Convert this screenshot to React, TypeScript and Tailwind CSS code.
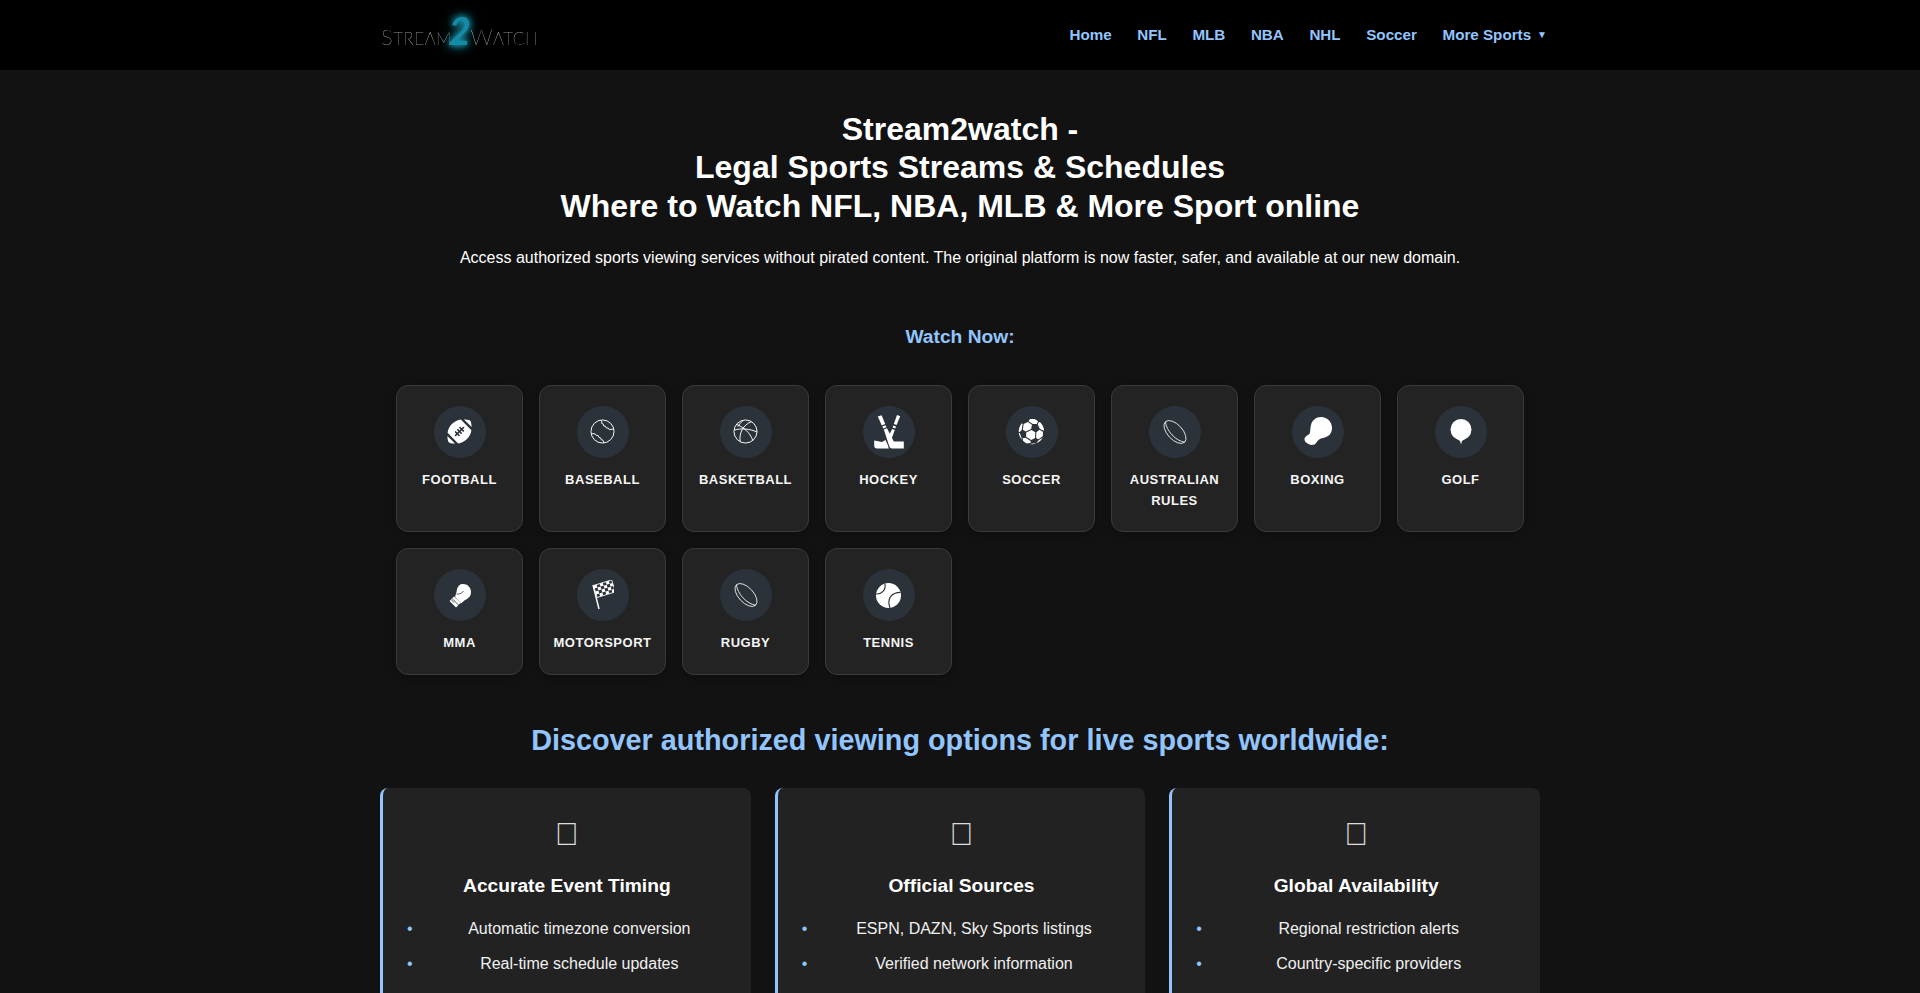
import React from "react";
import { FaFootballBall } from "react-icons/fa";
import { GiSoccerBall } from "react-icons/gi";

const RugbyBall = () => (
  <svg viewBox="0 0 26 26" className="w-[26px] h-[26px]" fill="none" stroke="white" strokeWidth="0.8">
    <g transform="rotate(47 13 13)">
      <ellipse cx="13" cy="13" rx="14" ry="7.5" />
      <path d="M-1 13 C 6 18.5, 20 18.5, 27 13" />
    </g>
  </svg>
);

const Baseball = () => (
  <svg viewBox="0 0 26 26" className="w-[25px] h-[25px]" fill="none" stroke="white" strokeWidth="1">
    <circle cx="13" cy="13" r="12" />
    <path d="M11 1.2 L12.5 3 L12 4.5 L14 5.5 L14.2 7.2 L16.2 7.6 L17 9.4 L19 9.4 L20 11 L22 10.8 L24.6 10.4" />
    <path d="M1.4 15.5 L4 15.2 L5.5 15.6 L6.5 17 L8.5 17.2 L9.2 19 L11 19.6 L11.6 21.4 L13.4 22 L14.6 24.9" />
  </svg>
);

const Basketball = () => (
  <svg viewBox="0 0 26 26" className="w-[25px] h-[25px]" fill="none" stroke="white" strokeWidth="1">
    <circle cx="13" cy="13" r="12" />
    <path d="M19 2.8 C 11 6, 6 14, 7.5 23.6" />
    <path d="M3.6 5.6 C 10 8, 18 14, 20.5 22.2" />
    <path d="M1.4 11.5 C 8 9.5, 17 10, 25 13.5" />
    <path d="M10.5 1.4 C 8 4, 6 6, 5 8" />
  </svg>
);

const HockeySticks = () => (
  <svg viewBox="0 0 30 34" className="w-[30px] h-[34px]" fill="white">
    <path d="M3.8 1.5 L7.6 0.2 L11.2 9 L7.8 10.4 Z" />
    <path d="M8.4 11.4 L11.6 10.2 L12.4 12.2 L9.2 13.4 Z" />
    <path d="M9.8 14.4 L13 13.2 L19.8 26.5 L29.8 26.5 L29.8 33.5 L18 33.5 Q16 33.5 15.2 31 Z" />
    <path d="M26.2 1.2 L23 0 L19.8 9 L22.6 10 Z" />
    <path d="M19.4 10.6 L22 11.6 L21.2 13.6 L18.6 12.6 Z" />
    <path d="M18.2 14 L20.8 15 L17 25.5 L14.8 20.5 Z" />
    <path d="M11.5 25 L13.8 30 L14.8 33.5 L3 33.5 Q0.2 33.5 0.2 30.5 L0.2 25.5 L8 27 Z" />
  </svg>
);

const BoxingBlob = () => (
  <svg viewBox="0 0 28 30" className="w-[28px] h-[30px]" fill="white">
    <path d="M17 0 C23.5 0 28 5 28 11 C28 17 24 20 19 21 C16 21.5 14 23 12.5 25.5 C11 28 8 28.5 5.5 27.5 C2 26 0 24 0.5 21.5 C1 19.5 3.5 18.5 5.5 17 C6.5 15 6 12 7 8 C8 3.5 12 0 17 0 Z" />
  </svg>
);

const GolfBall = () => (
  <svg viewBox="0 0 22 26" className="w-[22px] h-[26px]" fill="white">
    <circle cx="11" cy="10.5" r="10.5" />
    <path d="M7 20 L10 22 L11 25.5 L12 22 L15 20 Z" />
  </svg>
);

const Glove = () => (
  <svg viewBox="0 0 24 25" className="w-[24px] h-[25px]" fill="white">
    <path d="M14 1 C19 0.5 23 4 23 9 C23 13 20.5 15.5 17 17 L13 20.5 L7 14 L8.5 9 C9 5 10.5 1.5 14 1 Z" />
    <path d="M1.5 18 L6 13.5 L12.5 20 L8 24.5 Z" />
    <path d="M4 15.5 L10.5 22 M6 19.5 L3 16.5" stroke="#2c323a" strokeWidth="0.8" fill="none" />
    <path d="M8.5 11 C 11 11.5, 14 10.5, 15.5 8" stroke="#2c323a" strokeWidth="0.8" fill="none" />
  </svg>
);

const CheckerFlag = () => (
  <svg viewBox="0 0 22 30" className="w-[22px] h-[30px]">
    <path d="M1 5 L7 29" stroke="white" strokeWidth="1.4" />
    <g transform="translate(1.5 5.5) rotate(-17)" fill="white">
      <rect x="0" y="0" width="19" height="12.5" fill="#2c323a" stroke="white" strokeWidth="0.8" />
      <rect x="0" y="0" width="3.2" height="3.1" />
      <rect x="6.4" y="0" width="3.2" height="3.1" />
      <rect x="12.8" y="0" width="3.2" height="3.1" />
      <rect x="3.2" y="3.1" width="3.2" height="3.1" />
      <rect x="9.6" y="3.1" width="3.2" height="3.1" />
      <rect x="16" y="3.1" width="3" height="3.1" />
      <rect x="0" y="6.2" width="3.2" height="3.1" />
      <rect x="6.4" y="6.2" width="3.2" height="3.1" />
      <rect x="12.8" y="6.2" width="3.2" height="3.1" />
      <rect x="3.2" y="9.3" width="3.2" height="3.1" />
      <rect x="9.6" y="9.3" width="3.2" height="3.1" />
      <rect x="16" y="9.3" width="3" height="3.1" />
    </g>
  </svg>
);

const TennisBall = () => (
  <svg viewBox="0 0 24 24" className="w-[25px] h-[25px]">
    <circle cx="12" cy="12" r="12" fill="white" />
    <path d="M8.5 0.5 C 10 7, 5 11, 0.3 10.5" stroke="#2c323a" strokeWidth="1.1" fill="none" />
    <path d="M23.5 9 C 15 9, 10 15, 13.5 24" stroke="#2c323a" strokeWidth="1.1" fill="none" />
  </svg>
);

const sports = [
  { name: "Football", icon: <FaFootballBall className="w-[25px] h-[25px] text-white" /> },
  { name: "Baseball", icon: <Baseball /> },
  { name: "Basketball", icon: <Basketball /> },
  { name: "Hockey", icon: <HockeySticks /> },
  { name: "Soccer", icon: <GiSoccerBall className="w-[29px] h-[29px] text-white" /> },
  { name: "Australian Rules", icon: <RugbyBall /> },
  { name: "Boxing", icon: <BoxingBlob /> },
  { name: "Golf", icon: <GolfBall /> },
  { name: "MMA", icon: <Glove /> },
  { name: "Motorsport", icon: <CheckerFlag /> },
  { name: "Rugby", icon: <RugbyBall /> },
  { name: "Tennis", icon: <TennisBall /> },
];

const navItems = ["Home", "NFL", "MLB", "NBA", "NHL", "Soccer"];

const features = [
  { glyph: "\uE000", title: "Accurate Event Timing", items: ["Automatic timezone conversion", "Real-time schedule updates"] },
  { glyph: "\uE000", title: "Official Sources", items: ["ESPN, DAZN, Sky Sports listings", "Verified network information"] },
  { glyph: "\uE000", title: "Global Availability", items: ["Regional restriction alerts", "Country-specific providers"] },
];

function Logo() {
  return (
    <div className="flex items-baseline text-[#eeeeee] font-thin tracking-[0.6px] font-['Lato','Liberation_Sans',sans-serif] blur-[0.3px] h-[40px]">
      <span className="text-[22px]">S</span>
      <span className="text-[17px]">TREAM</span>
      <span className="text-[38px] leading-[30px] font-bold italic text-[#158ba6] [text-shadow:0_0_6px_#1fb0cc,0_0_12px_#1fb0cc] -ml-[3px] -mr-[1px]">2</span>
      <span className="text-[22px]">W</span>
      <span className="text-[17px]">ATCH</span>
    </div>
  );
}

function SportCard({ name, icon }: { name: string; icon: React.ReactNode }) {
  return (
    <a className="flex flex-col items-center px-[8px] py-[20px] rounded-xl border border-[#3a3a3a] bg-[#232323] shadow-[0_2px_8px_rgba(0,0,0,0.3)]">
      <span className="w-[52px] h-[52px] rounded-full bg-[#2c323a] flex items-center justify-center mb-[12px]">
        {icon}
      </span>
      <span className="text-[13px] leading-[20.8px] font-bold uppercase tracking-[0.5px] text-[#f5f5f5] text-center">{name}</span>
    </a>
  );
}

export default function App() {
  return (
    <div className="h-screen overflow-hidden bg-[#121212] text-white font-['Liberation_Sans',Arial,sans-serif]">
      <header className="h-[70px] bg-black">
        <div className="w-[1200px] mx-auto h-full pl-[21px] pr-[13px] flex items-center justify-between">
          <Logo />
          <nav className="flex items-center gap-[25.6px] text-[15.2px] font-bold text-[#93c5fd]">
            {navItems.map((item) => (
              <a key={item}>{item}</a>
            ))}
            <a className="flex items-center gap-[6px]">
              More Sports <span className="text-[10px]">▼</span>
            </a>
          </nav>
        </div>
      </header>

      <main className="w-[1200px] mx-auto px-5">
        <h1 className="pt-[40px] text-[32px] leading-[38.4px] font-bold text-center">
          Stream2watch -<br />
          Legal Sports Streams &amp; Schedules<br />
          Where to Watch NFL, NBA, MLB &amp; More Sport online
        </h1>
        <p className="mt-[20px] text-[16px] leading-[25.6px] text-center">
          Access authorized sports viewing services without pirated content. The original platform is now faster, safer, and available at our new domain.
        </p>

        <h2 className="mt-[54px] text-[19.2px] leading-[23px] font-bold text-center text-[#93c5fd]">Watch Now:</h2>

        <div className="mt-[37px] mx-auto w-[1128px] grid grid-cols-8 gap-4">
          {sports.map((s) => (
            <SportCard key={s.name} name={s.name} icon={s.icon} />
          ))}
        </div>

        <h2 className="mt-[48px] text-[28.8px] leading-[34.5px] font-bold text-center text-[#93c5fd]">
          Discover authorized viewing options for live sports worldwide:
        </h2>

        <div className="mt-[30px] grid grid-cols-3 gap-6">
          {features.map((f) => (
            <section key={f.title} className="bg-[#222222] rounded-lg border-l-[3px] border-[#93c5fd] px-6 pt-6 pb-[60px]">
              <div className="h-[44px] flex items-center justify-center text-[32px] text-center text-[#dddddd]">{f.glyph}</div>
              <h3 className="mt-[18px] text-[19.2px] leading-[23px] font-bold text-center">{f.title}</h3>
              <ul className="mt-[14px]">
                {f.items.map((item) => (
                  <li key={item} className="flex h-[35.6px] items-center text-[16px] text-[#f0f0f0]">
                    <span className="w-[25px] text-[#93c5fd]">•</span>
                    <span className="flex-1 text-center">{item}</span>
                  </li>
                ))}
              </ul>
            </section>
          ))}
        </div>
      </main>
    </div>
  );
}
